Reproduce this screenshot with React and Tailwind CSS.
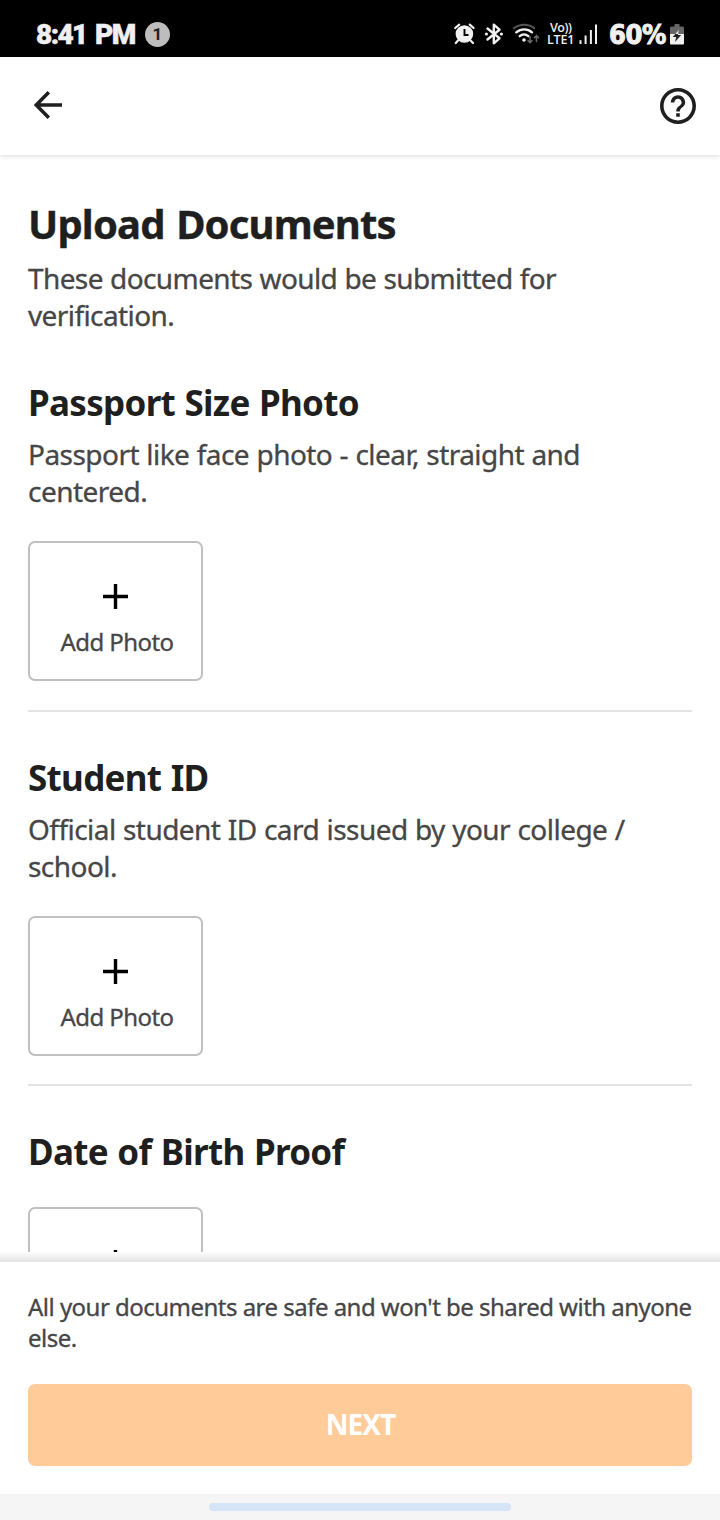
function AlarmIcon() {
  return (
    <svg className="block h-[22px] w-[21px]" viewBox="0 0 21 22" fill="none">
      <path d="M4 17.5 1.8 20M16.5 17.5 19 20M1.2 5 5.2 1.6M19.6 5 15.8 1.6" stroke="#f0f0f0" strokeWidth="2.2" strokeLinecap="round" />
      <circle cx="10.4" cy="11" r="8.8" fill="#f0f0f0" />
      <path d="M10.5 6v6H14.5" stroke="#000" strokeWidth="1.9" />
    </svg>
  );
}

function BluetoothIcon() {
  return (
    <svg className="block h-[22px] w-[20px]" viewBox="0 0 20 22" fill="none">
      <path d="M3.5 5.5 15.5 15.3 9.8 20.3V1.7L15.5 6.7 3.5 16.5" stroke="#f0f0f0" strokeWidth="2.4" strokeLinejoin="round" strokeLinecap="round" />
      <circle cx="2.4" cy="11" r="1.6" fill="#f0f0f0" />
      <circle cx="17.4" cy="11" r="1.6" fill="#f0f0f0" />
    </svg>
  );
}

function WifiIcon() {
  return (
    <svg className="block h-[22px] w-[28px]" viewBox="0 0 28 22" fill="none" strokeLinecap="round">
      <path d="M1.8 5.2C8 .5 16.5.5 22.3 5.2" stroke="#555" strokeWidth="2" />
      <path d="M4.3 9.4C9 5.4 15.5 5.4 20 9.4M7.7 13.2C10.2 11 13.7 11 16.4 13.2" stroke="#f0f0f0" strokeWidth="2.3" />
      <circle cx="12" cy="17" r="1.8" fill="#f0f0f0" />
      <path d="M18 13.5v6M16 17.6l2 2 2-2M24.5 18.5v-6M22.5 14.6l2-2 2 2" stroke="#666" strokeWidth="1.5" />
    </svg>
  );
}

function SignalIcon() {
  return (
    <svg className="block h-[22px] w-[19px]" viewBox="0 0 19 22" fill="#f0f0f0">
      <rect x="0.5" y="17.2" width="2" height="3.8" />
      <rect x="5.6" y="12.5" width="2" height="8.5" />
      <rect x="10.9" y="7" width="2" height="14" />
      <rect x="16" y="1.5" width="2" height="19.5" />
    </svg>
  );
}

function BatteryIcon() {
  return (
    <svg className="block h-[22px] w-[14px]" viewBox="0 0 14 22">
      <path d="M4.5 1h5v2.5H12.5A1.5 1.5 0 0 1 14 5v6H0V5a1.5 1.5 0 0 1 1.5-1.5h3z" fill="#666" />
      <path d="M0 11h14v9.5a1 1 0 0 1-1 1H1a1 1 0 0 1-1-1z" fill="#f0f0f0" />
      <path d="M9 6.5 2.8 14h3.4L5 19 11.2 12H7.8z" fill="#222" />
      <path d="M9 6.5 5.3 11h2.8z" fill="#eee" />
    </svg>
  );
}

function StatusBar() {
  return (
    <div className="flex h-[57px] shrink-0 items-center bg-black pt-[11px] pl-[36px] font-['Roboto',sans-serif] text-[#f0f0f0]">
      <span className="w-[99px] pt-[1px] text-[28px] leading-[24px] font-black tracking-[-1.6px] whitespace-nowrap [-webkit-text-stroke:0.5px] [word-spacing:3px]">8:41 PM</span>
      <span className="ml-[10px] flex size-[25px] items-center justify-center rounded-full bg-[#bdbdbd] text-[17px] leading-none font-bold text-[#222]">1</span>
      <div className="ml-[284px] flex items-center">
        <AlarmIcon />
        <div className="ml-[9px]"><BluetoothIcon /></div>
        <div className="ml-[8px]"><WifiIcon /></div>
        <div className="ml-[7px] w-[27px] font-['Open_Sans',sans-serif] text-[12.5px] leading-[12px] font-semibold">
          <div className="pl-[3px] tracking-[-0.5px] whitespace-nowrap">Vo))</div>
          <div className="tracking-[-0.2px] whitespace-nowrap">LTE1</div>
        </div>
        <div className="ml-[5px]"><SignalIcon /></div>
        <span className="ml-[11px] w-[58px] pt-[1px] font-['DejaVu_Sans_Condensed','DejaVu_Sans',sans-serif] text-[27px] leading-[24px] font-bold tracking-[-0.4px] whitespace-nowrap [-webkit-text-stroke:1px]">60%</span>
        <div className="ml-[3px]"><BatteryIcon /></div>
      </div>
    </div>
  );
}

function Header() {
  return (
    <header className="relative z-10 flex h-[98px] shrink-0 items-center justify-between bg-white pr-[24px] pl-[34px] shadow-[0_1px_5px_rgba(0,0,0,0.15)]">
      <button aria-label="Back" className="pb-[2px]">
        <svg className="block h-[28px] w-[28px]" viewBox="0 0 28 28" fill="none" stroke="#1f1f1f" strokeWidth="3.5">
          <path d="M14.8 1.2 2.2 14l12.6 12.8M2 14h26" />
        </svg>
      </button>
      <button aria-label="Help">
        <svg className="block size-[36px]" viewBox="2 2 20 20" fill="#1f1f1f">
          <path d="M11 16h2v2h-2v-2zm1-14C6.48 2 2 6.48 2 12s4.48 10 10 10 10-4.48 10-10S17.52 2 12 2zm0 18c-4.41 0-8-3.59-8-8s3.59-8 8-8 8 3.59 8 8-3.59 8-8 8zm0-14c-2.21 0-4 1.79-4 4h2c0-1.1.9-2 2-2s2 .9 2 2c0 2-3 1.75-3 5h2c0-2.25 3-2.5 3-5 0-2.21-1.79-4-4-4z" />
        </svg>
      </button>
    </header>
  );
}

function AddPhoto() {
  return (
    <button className="flex h-[140px] w-[175px] flex-col items-center rounded-[7px] border-2 border-[#c0c0c0] pt-[41px]">
      <svg className="block size-[25px]" viewBox="0 0 25 25" stroke="#000" strokeWidth="3.4">
        <path d="M12.5 0v25M0 12.5h25" />
      </svg>
      <span className="mt-[17px] ml-[3px] text-[24px] leading-[32px] tracking-[-0.6px] text-[#464646] [-webkit-text-stroke:0.3px]">Add Photo</span>
    </button>
  );
}

function Section({ title, text }) {
  return (
    <section className="flex flex-col items-start">
      <h2 className="text-[35px] leading-[48px] font-bold tracking-[-0.7px] text-[#1f1f1f] [word-spacing:1px]">{title}</h2>
      {text && (
        <p className="mt-[9px] text-[28px] leading-[37px] tracking-[-0.54px] text-[#464646] [-webkit-text-stroke:0.3px] [word-spacing:0.6px]">{text}</p>
      )}
      <div className="mt-[31px]">
        <AddPhoto />
      </div>
      <div className="mt-[28.5px] mb-[42px] h-[2px] w-full bg-[#e4e4e4]" />
    </section>
  );
}

export default function App() {
  return (
    <div className="flex h-[1520px] w-[720px] flex-col overflow-hidden bg-white font-['Noto_Sans',sans-serif]">
      <StatusBar />
      <Header />
      <main className="h-[1097px] shrink-0 overflow-hidden px-[28px] pt-[44px]">
        <h1 className="text-[40px] leading-[50px] font-bold tracking-[-0.85px] text-[#1f1f1f] [-webkit-text-stroke:0.4px] [word-spacing:2px]">Upload Documents</h1>
        <p className="mt-[11px] mb-[45.4px] text-[28px] leading-[37px] tracking-[-0.6px] text-[#464646] [-webkit-text-stroke:0.3px] [word-spacing:0.5px]">
          These documents would be submitted for verification.
        </p>
        <Section title="Passport Size Photo" text="Passport like face photo - clear, straight and centered." />
        <Section title="Student ID" text="Official student ID card issued by your college / school." />
        <Section title="Date of Birth Proof" />
      </main>
      <div className="h-[10px] shrink-0 bg-linear-to-b from-[#fdfdfd] to-[#e3e3e3]" />
      <footer className="flex h-[232px] shrink-0 flex-col px-[28px] pt-[29px]">
        <p className="-mr-[6px] text-[24px] leading-[31px] tracking-[-0.52px] text-[#464646] [-webkit-text-stroke:0.3px]">
          All your documents are safe and won't be shared with anyone else.
        </p>
        <button className="mt-[31px] h-[82px] w-full rounded-[7px] bg-[#ffcb99] pb-[3px] pl-[1px] text-[28px] font-bold tracking-[-1px] text-white">NEXT</button>
      </footer>
      <div className="flex flex-1 justify-center bg-[#f5f5f5] pt-[9px]">
        <div className="h-[8px] w-[302px] rounded-full bg-[#d5e4f6]" />
      </div>
    </div>
  );
}
